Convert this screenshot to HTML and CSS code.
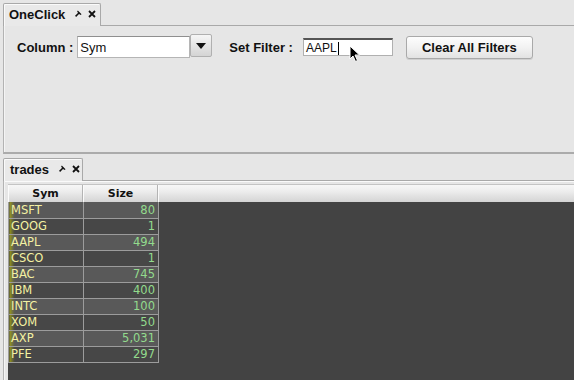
FILE: index.html
```html
<!DOCTYPE html>
<html>
<head>
<meta charset="utf-8">
<link rel="stylesheet" href="styles.css">
</head>
<body>
<div class="app">
  <section class="dock dock-top">
    <div class="tabstrip">
      <div class="tab">
        <span class="tab-title">OneClick</span>
        <svg class="pin" width="7" height="7" viewBox="0 0 7 7"><path d="M2.8 0.4 L6.6 4.2 L5.2 4.9 L2.1 1.8 Z" fill="#111"/><path d="M4.2 2.8 L0.6 6.4" stroke="#111" stroke-width="1.5"/></svg>
        <svg class="close" width="8" height="8" viewBox="0 0 8 8"><path d="M1 1 L7 7 M7 1 L1 7" stroke="#111" stroke-width="1.8"/></svg>
      </div>
      <div class="strip-rest"></div>
    </div>
    <div class="panel panel-top">
      <div class="controls">
        <span class="label label-col">Column :</span>
        <div class="combo">
          <div class="combo-field">Sym</div>
          <div class="combo-btn"><svg width="10" height="6" viewBox="0 0 10 6"><path d="M0 0 L10 0 L5 6 Z" fill="#111"/></svg></div>
        </div>
        <span class="label label-filter">Set Filter :</span>
        <div class="textfield">AAPL<span class="caret"></span></div>
        <div class="btn">Clear All Filters</div>
      </div>
    </div>
  </section>
  <section class="dock dock-bottom">
    <div class="tabstrip">
      <div class="tab tab-trades">
        <span class="tab-title">trades</span>
        <svg class="pin" width="7" height="7" viewBox="0 0 7 7"><path d="M2.8 0.4 L6.6 4.2 L5.2 4.9 L2.1 1.8 Z" fill="#111"/><path d="M4.2 2.8 L0.6 6.4" stroke="#111" stroke-width="1.5"/></svg>
        <svg class="close" width="8" height="8" viewBox="0 0 8 8"><path d="M1 1 L7 7 M7 1 L1 7" stroke="#111" stroke-width="1.8"/></svg>
      </div>
      <div class="strip-rest"></div>
    </div>
    <div class="panel panel-bottom">
      <div class="grid">
        <div class="grid-head">
          <div class="hcell">Sym</div>
          <div class="hcell">Size</div>
          <div class="hfill"></div>
        </div>
        <div class="grid-body">
          <table class="data">
            <tr class="odd"><td class="sym">MSFT</td><td class="num">80</td></tr>
            <tr><td class="sym">GOOG</td><td class="num">1</td></tr>
            <tr class="odd"><td class="sym">AAPL</td><td class="num">494</td></tr>
            <tr><td class="sym">CSCO</td><td class="num">1</td></tr>
            <tr class="odd"><td class="sym">BAC</td><td class="num">745</td></tr>
            <tr><td class="sym">IBM</td><td class="num">400</td></tr>
            <tr class="odd"><td class="sym">INTC</td><td class="num">100</td></tr>
            <tr><td class="sym">XOM</td><td class="num">50</td></tr>
            <tr class="odd"><td class="sym">AXP</td><td class="num">5,031</td></tr>
            <tr><td class="sym">PFE</td><td class="num">297</td></tr>
          </table>
        </div>
      </div>
    </div>
  </section>
  <svg class="cursor" width="12" height="18" viewBox="0 0 12 18"><path d="M1 1 L1 14 L4 11 L6.5 16.5 L8.5 15.5 L6 10 L10.5 10 Z" fill="#000" stroke="#fff" stroke-width="1"/></svg>
</div>
</body>
</html>
```

FILE: styles.css
```css
* { box-sizing: border-box; }
html, body { margin: 0; padding: 0; }
body {
  width: 574px;
  height: 380px;
  overflow: hidden;
  background: #e6e6e6;
  font-family: "Liberation Sans", Arial, sans-serif;
  color: #111;
}
.app {
  position: relative;
  width: 574px;
  height: 380px;
  display: flex;
  flex-direction: column;
}
.dock { display: flex; flex-direction: column; }
.dock-bottom { flex: 1; margin-top: 1px; }
.tabstrip {
  display: flex;
  align-items: flex-end;
  height: 26px;
  padding-left: 3px;
}
.tab {
  height: 23px;
  width: 98px;
  display: flex;
  align-items: center;
  padding: 0 0 2px 5px;
  border: 1px solid #a9a9a9;
  border-bottom: none;
  border-radius: 2px 2px 0 0;
  background: #e9e9e9;
  box-shadow: inset 1px 1px 0 #fafafa;
}
.tab-trades { width: 80px; padding-left: 6px; }
.tab-title { font-weight: bold; font-size: 13px; }
.pin { margin-left: 10px; margin-top: -1px; }
.close { margin-left: 6px; }
.strip-rest {
  flex: 1;
  height: 100%;
  border-bottom: 1px solid #a9a9a9;
}
.panel {
  margin-left: 3px;
  border-left: 1px solid #b3b3b3;
  box-shadow: inset 1px 0 0 #f4f4f4;
}
.panel-top {
  height: 128px;
  border-bottom: 2px solid #ababab;
  padding: 10px 0 0 13px;
}
.controls {
  display: flex;
  align-items: center;
  height: 22px;
}
.label { font-weight: bold; font-size: 13px; }
.combo { display: flex; margin-left: 4px; height: 22px; }
.combo-field {
  width: 113px;
  height: 22px;
  background: #fff;
  border: 1px solid #b5b5b5;
  border-top-color: #8f8f8f;
  font-size: 13px;
  padding: 3px 0 0 2px;
}
.combo-btn {
  width: 22px;
  height: 23px;
  margin-top: -2px;
  border: 1px solid #b0b0b0;
  border-radius: 2px;
  background: linear-gradient(#f6f6f6, #d4d4d4);
  display: flex;
  align-items: center;
  justify-content: center;
}
.label-filter { margin-left: 17px; }
.textfield {
  margin-left: 10px;
  width: 90px;
  height: 18px;
  background: #fff;
  border: 1px solid #b0b0b0;
  border-top: 2px solid #555;
  font-size: 12px;
  padding: 1px 0 0 2px;
  display: flex;
  align-items: center;
}
.caret { width: 1px; height: 13px; background: #000; margin-left: 1px; }
.btn {
  margin-left: 13px;
  width: 127px;
  height: 23px;
  border: 1px solid #a9a9a9;
  border-radius: 3px;
  background: linear-gradient(#fdfdfd, #f2f2f2 50%, #e2e2e2);
  box-shadow: 0 1px 0 #cfcfcf;
  font-weight: bold;
  font-size: 13px;
  display: flex;
  align-items: center;
  justify-content: center;
}
.panel-bottom {
  flex: 1;
  display: flex;
  padding: 3px 0 0 4px;
  box-shadow: inset 1px 0 0 #f4f4f4, inset 0 1px 0 #fafafa;
}
.grid { flex: 1; display: flex; flex-direction: column; }
.grid-head {
  display: flex;
  height: 18px;
  background: linear-gradient(#f7f7f7, #ececec 40%, #d4d4d4);
  border-top: 1px solid #c4c4c4;
}
.hcell {
  width: 75px;
  border-right: 1px solid #b4b4b4;
  border-left: 1px solid #fbfbfb;
  font-family: "DejaVu Sans", sans-serif;
  font-weight: bold;
  font-size: 11px;
  text-align: center;
  padding-top: 2px;
}
.hfill { flex: 1; border-left: 1px solid #fbfbfb; }
.grid-body { flex: 1; background: #434343; }
.data {
  border-collapse: collapse;
  font-family: "DejaVu Sans", sans-serif;
  font-size: 11.5px;
}
.data td {
  height: 16px;
  padding: 0 2px;
  border: 1px solid #9c9c9c;
  border-top: none;
  background-color: #474747;
  line-height: 14px;
}
.data tr.odd td { background-color: #595959; }
.data td.sym {
  width: 75px;
  color: #f4f1a2;
  background-image: linear-gradient(to right, rgba(160,160,20,0.9) 0, rgba(160,160,20,0) 5px);
  padding-left: 2px;
}
.data td.num {
  width: 75px;
  color: #93db8d;
  text-align: right;
  padding-right: 3px;
}
.cursor {
  position: absolute;
  left: 349px;
  top: 45px;
}
```
